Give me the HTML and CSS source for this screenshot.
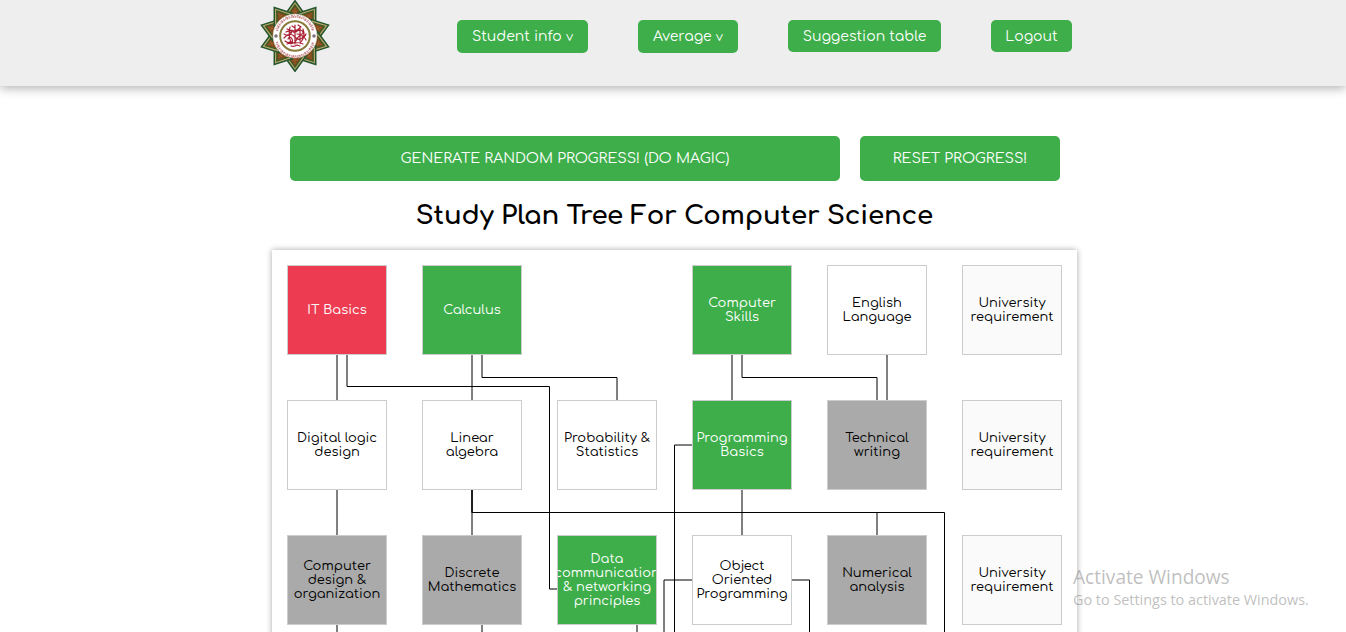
FILE: index.html
```
<!DOCTYPE html>
<html lang="en">
<head>
<meta charset="utf-8">
<title>Study Plan Tree</title>
<link rel="stylesheet" href="styles.css">
</head>
<body>
<header class="topbar">
  <svg class="logo" viewBox="-35 -36 70 72" aria-hidden="true">
    <defs>
      <g id="ray">
        <path d="M0-35.3L11-20H-11Z" fill="#b9a769" stroke="#24552f" stroke-width="1.5"/>
        <path d="M0-31L7.4-20.5H-7.4Z" fill="#7d4a1e" stroke="#3a5a28" stroke-width="1.3"/>
        <path d="M-2.5-24.5h5M0-28v5" stroke="#a5602a" stroke-width=".8"/>
      </g>
    </defs>
    <use href="#ray"/><use href="#ray" transform="rotate(36)"/><use href="#ray" transform="rotate(72)"/><use href="#ray" transform="rotate(108)"/><use href="#ray" transform="rotate(144)"/><use href="#ray" transform="rotate(180)"/><use href="#ray" transform="rotate(216)"/><use href="#ray" transform="rotate(252)"/><use href="#ray" transform="rotate(288)"/><use href="#ray" transform="rotate(324)"/>
    <circle r="22" fill="#fff" stroke="#d9cfae" stroke-width=".5"/>
    <g fill="none" stroke="#c98288">
      <path d="M-18-5A18.5 18.5 0 0 1 18-5M-18 6A18.5 18.5 0 0 0 18 6" stroke-width="2" stroke-dasharray="1.3 .8 .6 .7 2 .8"/>
      <path d="M-19-7A20 20 0 0 1 19-7M-19 8A20 20 0 0 0 19 8" stroke-width="1" stroke-dasharray="1 1.8 2 1.2"/>
    </g>
    <circle cx="-19" r="1.8" fill="#81747c"/><circle cx="19" r="1.8" fill="#81747c"/>
    <circle r="14.8" fill="#fff" stroke="#8a7b3b" stroke-width="2"/>
    <g fill="none" stroke="#a91e32" stroke-width="1.2" stroke-linecap="round">
      <path d="M-11-2Q-4 2-3-6M-10 5Q-2 11 2 3T11 4M-8-7Q0-3 5-8M-11 2Q-5-5 0 1T11-2M0-11V8M5-9V5M-5-9Q-7 0-4 6M-8 8Q0 5 8 8M8-7Q11 1 5 7M-3-10l3 2M2-5q5-2 6 1t-6 2M-7 3q2-4 4 0t-3 3M2 9l3 1M-9-4q4-2 5 1M-4 10q3 1 6-1M7 1q3 0 4-3M-2-4q3 1 4-1M3-11l3 2"/>
    </g>
  </svg>
  <nav class="menu">
    <a class="btn btn-info">Student info <small>v</small></a>
    <a class="btn btn-average">Average <small>v</small></a>
    <a class="btn btn-table">Suggestion table</a>
    <a class="btn btn-logout">Logout</a>
  </nav>
</header>
<main class="page">
  <div class="actions">
    <button class="action action-generate">GENERATE RANDOM PROGRESS! (DO MAGIC)</button>
    <button class="action action-reset">RESET PROGRESS!</button>
  </div>
  <h1 class="title">Study Plan Tree For Computer Science</h1>
  <section class="tree">
    <div class="node failed">IT Basics</div>
    <div class="node passed">Calculus</div>
    <div></div>
    <div class="node passed">Computer<br>Skills</div>
    <div class="node">English<br>Language</div>
    <div class="node req">University<br>requirement</div>
    <div class="node">Digital logic<br>design</div>
    <div class="node">Linear<br>algebra</div>
    <div class="node">Probability &amp;<br>Statistics</div>
    <div class="node passed">Programming<br>Basics</div>
    <div class="node locked">Technical<br>writing</div>
    <div class="node req">University<br>requirement</div>
    <div class="node locked">Computer<br>design &amp;<br>organization</div>
    <div class="node locked">Discrete<br>Mathematics</div>
    <div class="node passed">Data<br>communication<br>&amp; networking<br>principles</div>
    <div class="node">Object<br>Oriented<br>Programming</div>
    <div class="node locked">Numerical<br>analysis</div>
    <div class="node req">University<br>requirement</div>
    <svg class="links" viewBox="272 250 805 382" aria-hidden="true">
      <path d="M337 355V400M347 355V386.5H549.5V589H557M472 355V400M482 355V377.5H617V400M732 355V400M742 355V377.5H877V400M887 355V400"/>
      <path d="M337 490V535M472 490V535M742 490V535M692 445H674.5V632M692 580H664V632M792 580H809.5V632M337 625V632M482 625V632M637 625V632"/>
      <path d="M472 490V512.5H877V535"/>
      <path d="M472 490V512.5H944.5V632"/>
    </svg>
  </section>
</main>
<aside class="watermark">
  <div class="watermark-title">Activate Windows</div>
  <div class="watermark-text">Go to Settings to activate Windows.</div>
</aside>
</body>
</html>
```
FILE: styles.css
```
* { box-sizing: border-box; }
html { overflow: hidden; }
body {
  margin: 0;
  height: 632px;
  overflow: hidden;
  position: relative;
  background: #fff;
  color: #000;
  font-family: Comfortaa, Lato, sans-serif;
}
.topbar {
  display: flex;
  align-items: flex-start;
  height: 86px;
  padding-left: 260px;
  background: #eee;
  box-shadow: 0 2px 10px rgba(0, 0, 0, .32);
}
.logo { width: 70px; height: 72px; }
.menu {
  display: flex;
  align-items: flex-start;
  gap: 50px;
  padding: 20px 0 0 127px;
}
.btn {
  height: 32px;
  border-radius: 5px;
  background: #3dae49;
  color: #fff;
  font-size: 14px;
  line-height: 33px;
  text-align: center;
  white-space: nowrap;
}
.btn small { font-size: 13px; }
.btn-info { width: 131px; height: 33px; }
.btn-average { width: 100px; height: 33px; }
.btn-table { width: 153px; }
.btn-logout { width: 81px; }
.page { width: 805px; margin-left: 272px; }
.actions {
  display: flex;
  gap: 20px;
  padding: 50px 0 0 18px;
}
.action {
  height: 45px;
  padding: 0 0 2px;
  border: 0;
  border-radius: 5px;
  background: #3dae49;
  color: #fff;
  font: 14.3px Comfortaa, Lato, sans-serif;
}
.action-generate { width: 550px; }
.action-reset { width: 200px; }
.title {
  margin: 0;
  height: 69px;
  font-size: 26px;
  font-weight: 700;
  line-height: 70px;
  letter-spacing: -.12px;
  text-align: center;
  white-space: nowrap;
}
.tree {
  position: relative;
  display: grid;
  grid-template-columns: repeat(6, 100px);
  grid-auto-rows: 90px;
  gap: 45px 35px;
  height: 392px;
  padding: 15px;
  background: #fff;
  box-shadow: 0 0 6px rgba(0, 0, 0, .35);
}
.node {
  display: flex;
  align-items: center;
  justify-content: center;
  overflow: hidden;
  border: 1px solid #ccc;
  background: #fff;
  font-size: 13px;
  line-height: 14px;
  text-align: center;
  white-space: nowrap;
}
.passed { background: #3dae49; color: #fff; }
.failed { background: #ed3c52; color: #fff; }
.locked { background: #aaa; }
.req { background: #fafafa; }
.links {
  position: absolute;
  left: 0;
  top: 0;
  width: 805px;
  height: 382px;
  fill: none;
  stroke: #000;
  stroke-width: 1;
}
.watermark {
  position: absolute;
  left: 1073px;
  top: 565px;
  color: rgba(130, 130, 130, .52);
  font-family: "Segoe UI", "Open Sans", sans-serif;
  white-space: nowrap;
}
.watermark-title { font-size: 19.1px; line-height: 25px; }
.watermark-text { font-size: 14.4px; line-height: 19px; }
```
